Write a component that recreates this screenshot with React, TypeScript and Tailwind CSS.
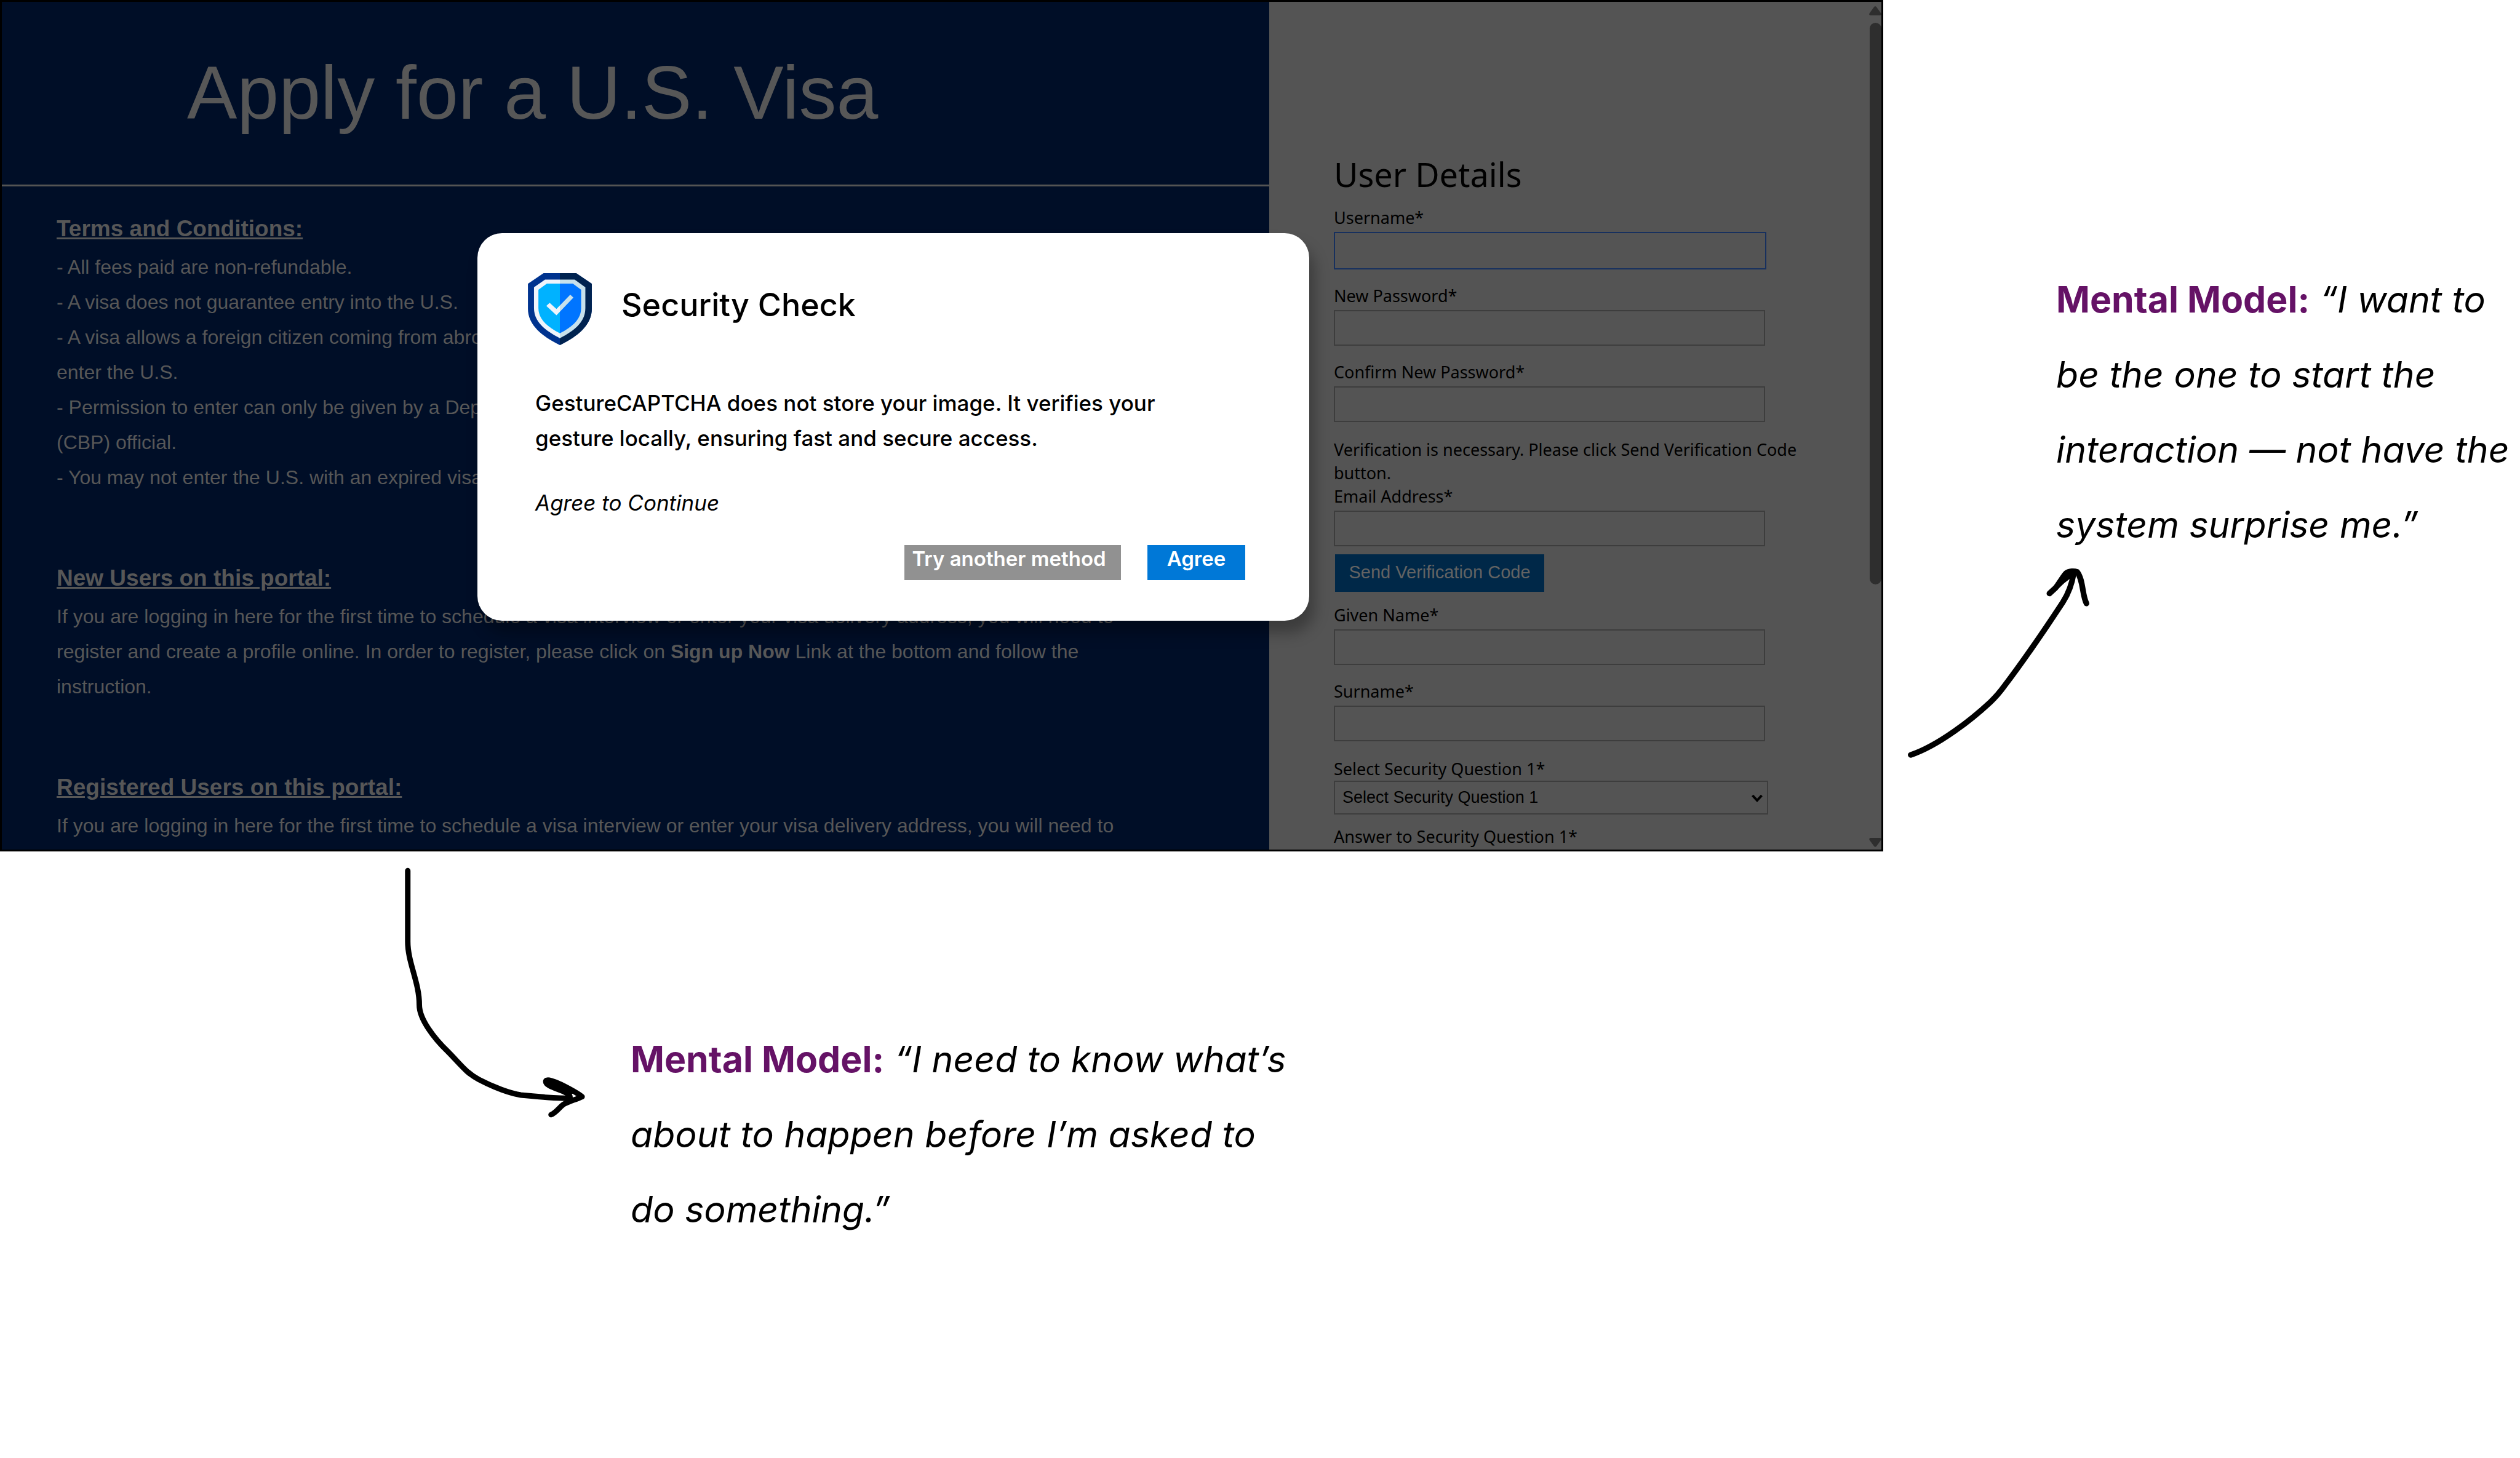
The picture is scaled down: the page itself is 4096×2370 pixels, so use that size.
import type { ReactNode } from "react";

const TERMS = [
  "- All fees paid are non-refundable.",
  "- A visa does not guarantee entry into the U.S.",
  "- A visa allows a foreign citizen coming from abroad to travel to the port of entry and request to\nenter the U.S.",
  "- Permission to enter can only be given by a Department of Homeland Security Customs and Border\n(CBP) official.",
  "- You may not enter the U.S. with an expired visa.",
];

function Section({ title, children }: { title: string; children: ReactNode }) {
  return (
    <section className="flex flex-col gap-1.5">
      <h2 className="text-[37px] leading-[57px] font-bold underline">{title}</h2>
      <div className="text-[32px] leading-[57px]">{children}</div>
    </section>
  );
}

function Field({ id, label, type = "text", active = false }: { id: string; label: string; type?: string; active?: boolean }) {
  return (
    <div className="flex flex-col gap-1">
      <label htmlFor={id} className="text-[27px] leading-[38px]">
        {label}
      </label>
      <input
        id={id}
        type={type}
        className={
          active
            ? "h-[61px] w-[703px] border-2 border-[#17305e] bg-transparent px-3 outline-none"
            : "h-[58px] w-[701px] border-2 border-[#3d3d3d] bg-transparent px-3 outline-none"
        }
      />
    </div>
  );
}

function Shield() {
  return (
    <svg viewBox="87 75 347 391" className="h-[117px] w-[104px] shrink-0" aria-hidden="true">
      <defs>
        <clipPath id="rightHalf">
          <rect x="260.5" y="70" width="180" height="400" />
        </clipPath>
      </defs>
      <g>
        <path fill="#00338f" d="M172 75H349L434 133V268C434 345 378 408 260.5 466C143 408 87 345 87 268V133Z" />
        <path fill="#eff4fb" d="M180 110H341L399 152V265C399 330 355 380 260.5 428C166 380 120 330 120 265V152Z" />
        <path fill="#00b2ff" d="M190 132H331L376 165V265C376 320 338 362 260.5 402C183 362 144 320 144 265V165Z" />
        <path fill="#eff4fb" d="M205 236L242 270L317 192L334 208L242 304L187 253Z" />
      </g>
      <g clipPath="url(#rightHalf)">
        <path fill="#002350" d="M172 75H349L434 133V268C434 345 378 408 260.5 466C143 408 87 345 87 268V133Z" />
        <path fill="#c7e1ec" d="M180 110H341L399 152V265C399 330 355 380 260.5 428C166 380 120 330 120 265V152Z" />
        <path fill="#0075ff" d="M190 132H331L376 165V265C376 320 338 362 260.5 402C183 362 144 320 144 265V165Z" />
        <path fill="#c7e1ec" d="M205 236L242 270L317 192L334 208L242 304L187 253Z" />
      </g>
    </svg>
  );
}

function ArrowUpRight() {
  return (
    <svg viewBox="0 60 1170 1110" className="h-[331px] w-[349px]" fill="none" stroke="#000" strokeWidth="31" strokeLinecap="round" strokeLinejoin="round" aria-hidden="true">
      <path d="M96 1090C250 1038 430 895 530 802C560 774 585 744 606 715C720 565 850 372 925 258C962 200 976 150 984 100" />
      <path d="M852 210L885 180C905 155 925 118 943 99C960 86 988 87 1003 92C1037 136 1030 218 1054 264" />
      <path fill="#000" stroke="none" d="M876 170L925 98Q960 68 1008 80L992 118L966 128Q930 153 901 184Z" />
    </svg>
  );
}

function ArrowDownRight() {
  return (
    <svg viewBox="0 0 1200 1450" className="h-[432px] w-[358px] shrink-0" fill="none" stroke="#000" strokeWidth="30" strokeLinecap="round" strokeLinejoin="round" aria-hidden="true">
      <path d="M183 38V425C183 540 246 645 246 770C246 850 330 955 400 1023C465 1088 500 1140 570 1177C650 1219 740 1252 800 1262C880 1270 990 1282 1067 1279" />
      <path d="M1067 1279C1080 1238 936 1226 936 1188C936 1170 990 1190 1020 1205C1060 1225 1110 1252 1134 1271C1100 1287 1050 1300 1030 1315C1005 1335 990 1360 965 1369" />
      <path fill="#000" stroke="none" d="M936 1185C990 1185 1060 1225 1084 1254L1070 1262C1040 1235 940 1215 936 1185Z" />
    </svg>
  );
}

function Dialog() {
  return (
    <div className="absolute inset-0 flex items-center pt-1 pl-[773px]">
      <div
        role="dialog"
        aria-labelledby="dialog-title"
        className="flex w-[1352px] flex-col rounded-[40px] bg-white pt-[65px] pr-[104px] pb-[66px] pl-[82px] font-[Inter,sans-serif] text-black shadow-[8px_20px_24px_rgba(0,0,0,0.3)]"
      >
        <div className="flex items-start gap-12">
          <Shield />
          <h2 id="dialog-title" className="text-[52px] leading-[103px] font-medium">
            Security Check
          </h2>
        </div>
        <p className="mt-[66px] pl-3 text-[35px] leading-[57px] font-medium">
          GestureCAPTCHA does not store your image. It verifies your
          <br />
          gesture locally, ensuring fast and secure access.
        </p>
        <p className="mt-12 pl-3 text-[35px] leading-[57px] italic">Agree to Continue</p>
        <div className="mt-10 flex justify-end gap-[43px] text-[33px] leading-[44px] font-semibold text-white">
          <button type="button" className="w-[352px] bg-[#919191] pr-3 pb-[13px]">
            Try another method
          </button>
          <button type="button" className="w-[159px] bg-[#0078d7] pb-[13px]">
            Agree
          </button>
        </div>
      </div>
    </div>
  );
}

function Scrollbar() {
  return (
    <div className="flex w-5 flex-col items-center pt-[7px] pb-1" aria-hidden="true">
      <svg viewBox="0 0 20 15" className="h-[15px] w-5" fill="#2e2e2e">
        <path d="M8 1.5Q10-.8 12 1.5L19.3 11.5Q20.6 14.8 17.5 15H2.5Q-.6 14.8.7 11.5Z" />
      </svg>
      <div className="mt-3 h-[913px] w-[19px] rounded-full bg-[#2e2e2e]" />
      <svg viewBox="0 0 20 15" className="mt-auto h-[15px] w-5" fill="#2e2e2e">
        <path d="M8 13.5Q10 15.8 12 13.5L19.3 3.5Q20.6.2 17.5 0H2.5Q-.6.2.7 3.5Z" />
      </svg>
    </div>
  );
}

function Note({ children }: { children: ReactNode }) {
  return (
    <p className="font-[Inter,sans-serif] text-[59px] leading-[122px] text-black italic">
      <strong className="font-bold text-[#651266] not-italic">Mental Model:</strong> {children}
    </p>
  );
}

export default function App() {
  return (
    <main className="min-h-screen bg-white">
      <div className="grid grid-cols-[3061fr_1035fr]">
        <div className="relative grid h-[1384px] grid-cols-[2060fr_995fr] overflow-hidden border-3 border-black">
          <div className="overflow-hidden bg-[#000e27] font-['Liberation_Sans',Arial,sans-serif] text-[#575757]">
            <header className="h-[300px] border-b-3 border-[#545454] pt-[78px] pl-[301px]">
              <h1 className="text-[122px] leading-[140px]">Apply for a U.S. Visa</h1>
            </header>
            <div className="flex flex-col gap-[106px] pt-10 pl-[89px]">
              <Section title="Terms and Conditions:">
                {TERMS.map((term) => (
                  <p key={term} className="whitespace-pre-line">
                    {term}
                  </p>
                ))}
              </Section>
              <Section title="New Users on this portal:">
                If you are logging in here for the first time to schedule a visa interview or enter your visa delivery address, you will need to
                <br />
                register and create a profile online. In order to register, please click on <b>Sign up Now</b> Link at the bottom and follow the
                <br />
                instruction.
              </Section>
              <Section title="Registered Users on this portal:">
                If you are logging in here for the first time to schedule a visa interview or enter your visa delivery address, you will need to
              </Section>
            </div>
          </div>

          <div className="flex overflow-hidden bg-[#545454] text-black">
            <form className="min-w-0 flex-1 pt-[242px] pl-[105px] font-['Noto_Sans',sans-serif]">
              <h2 className="mb-3.5 text-[54px] leading-[76px]">User Details</h2>
              <div className="flex flex-col gap-6">
                <Field id="username" label="Username*" active />
                <Field id="new-password" label="New Password*" type="password" />
                <Field id="confirm-password" label="Confirm New Password*" type="password" />
              </div>
              <p className="mt-[26px] w-[780px] text-[27px] leading-[38px]">
                Verification is necessary. Please click Send Verification Code
                <br />
                button.
              </p>
              <Field id="email" label="Email Address*" type="email" />
              <button
                type="button"
                className="mt-[13px] mb-[19px] ml-0.5 block h-[61px] w-[340px] bg-[#002848] pb-1 font-['Liberation_Sans',Arial,sans-serif] text-[29px] leading-[40px] text-[#636363]"
              >
                Send Verification Code
              </button>
              <div className="flex flex-col gap-6">
                <Field id="given-name" label="Given Name*" />
                <Field id="surname" label="Surname*" />
              </div>
              <label htmlFor="question" className="mt-[26px] block text-[27px] leading-[38px]">
                Select Security Question 1*
              </label>
              <div className="relative w-[706px]">
                <select
                  id="question"
                  className="block h-[55px] w-full appearance-none border-2 border-[#3d3d3d] bg-transparent px-3 font-['Liberation_Sans',Arial,sans-serif] text-[27px]"
                >
                  <option>Select Security Question 1</option>
                </select>
                <svg viewBox="0 0 20 14" className="absolute top-[22px] right-2 h-[14px] w-5" fill="none" stroke="#000" strokeWidth="4" aria-hidden="true">
                  <path d="M2.5 2L10 10L17.5 2" />
                </svg>
              </div>
              <p className="mt-[17px] text-[27px] leading-[38px]">Answer to Security Question 1*</p>
            </form>
            <Scrollbar />
          </div>

          <Dialog />
        </div>

        <aside className="pt-[426px] pl-4">
          <div className="pl-[265px]">
            <Note>
              “I want to
              <br />
              be the one to start the
              <br />
              interaction — not have the
              <br />
              system surprise me.”
            </Note>
          </div>
          <div className="mt-1.5">
            <ArrowUpRight />
          </div>
        </aside>
      </div>

      <div className="flex gap-[59px] pt-5 pl-[608px]">
        <ArrowDownRight />
        <div className="pt-[257px]">
          <Note>
            “I need to know what’s
            <br />
            about to happen before I’m asked to
            <br />
            do something.”
          </Note>
        </div>
      </div>
    </main>
  );
}
